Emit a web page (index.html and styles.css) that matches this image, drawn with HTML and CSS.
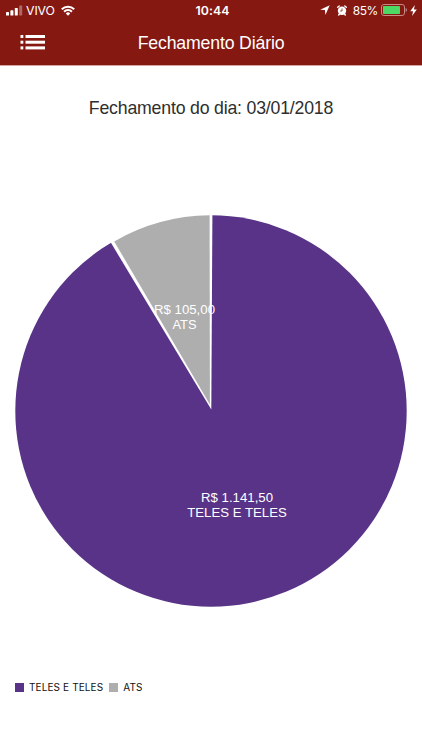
FILE: index.html
```html
<!DOCTYPE html>
<html lang="pt-BR">
<head>
    <meta charset="UTF-8">
    <meta name="viewport" content="width=device-width, initial-scale=1.0">
    <title>Fechamento Diário</title>
    <link rel="stylesheet" href="styles.css">
</head>
<body>

    <header class="header">
        <div class="status-bar">
            <div class="status-left">
                <svg class="signal" width="17" height="11" viewBox="0 0 17 11" fill="#fff">
                    <rect x="0" y="7" width="3" height="3.5" rx="0.6"/>
                    <rect x="4.4" y="5.3" width="3" height="5.2" rx="0.6"/>
                    <rect x="8.8" y="3" width="3" height="7.5" rx="0.6"/>
                    <rect x="13.2" y="0.5" width="3" height="10" rx="0.6" opacity="0.35"/>
                </svg>
                <span class="carrier">VIVO</span>
                <svg class="wifi" width="14" height="11" viewBox="0 0 14 11" fill="none" stroke="#fff" stroke-width="2">
                    <path d="M0.8 4.2a8.8 8.8 0 0 1 12.4 0"/>
                    <path d="M3.1 6.7a5.5 5.5 0 0 1 7.8 0"/>
                    <path d="M7 10.7L4.8 8.4a3.1 3.1 0 0 1 4.4 0z" fill="#fff" stroke="none"/>
                </svg>
            </div>
            <span class="time">10:44</span>
            <div class="status-right">
                <svg class="location" width="10" height="10" viewBox="0 0 10 10" fill="#fff">
                    <path d="M9.7 0.3L5.4 9.9L4.9 5.1L0.2 4.7z"/>
                </svg>
                <svg class="alarm" width="10" height="11" viewBox="0 0 10 11">
                    <path d="M0.7 2.3L2.2 1M9.3 2.3L7.8 1M2.4 9L1.7 10M7.6 9L8.3 10" stroke="#fff" stroke-width="1.4" stroke-linecap="round"/>
                    <circle cx="5" cy="5.8" r="4.2" fill="#fff"/>
                    <path d="M5 3.5V6H3.2" fill="none" stroke="#851912" stroke-width="0.8"/>
                </svg>
                <span class="percent">85%</span>
                <svg class="battery" width="26" height="12" viewBox="0 0 26 12">
                    <rect x="0.5" y="0.5" width="23" height="11" rx="2.4" fill="none" stroke="#c58c86"/>
                    <rect x="2" y="2" width="17" height="8" rx="0.8" fill="#4cd964"/>
                    <path d="M24.7 4a2.2 2.2 0 0 1 0 4z" fill="#c58c86"/>
                </svg>
                <svg class="bolt" width="7" height="11" viewBox="0 0 6 10" fill="#fff">
                    <path d="M4.2 0L0 5.6H2.6L1.7 10L6 4.2H3.4z"/>
                </svg>
            </div>
        </div>
        <div class="nav-bar">
            <svg class="menu" width="25" height="15" viewBox="0 0 25 15" fill="#fff">
                <rect x="0.5" y="0" width="2.8" height="3"/>
                <rect x="5.5" y="0" width="19.5" height="3"/>
                <rect x="0.5" y="5.7" width="2.8" height="3"/>
                <rect x="5.5" y="5.7" width="19.5" height="3"/>
                <rect x="0.5" y="11.4" width="2.8" height="3"/>
                <rect x="5.5" y="11.4" width="19.5" height="3"/>
            </svg>
            <h1 class="title">Fechamento Diário</h1>
        </div>
    </header>

    <main>
        <h2 class="subtitle">Fechamento do dia: 03/01/2018</h2>

        <svg class="chart" width="392" height="392" viewBox="0 0 392 392">
            <circle cx="196" cy="196" r="195.7" fill="#593387"/>
            <!-- gap between the slices -->
            <path d="M196.3 194.5L95.8 27.6L96.5 26.5A197 197 0 0 1 197.4 -1z" fill="#fff"/>
            <path d="M194.9 189.5L99.2 26.4A195.7 195.7 0 0 1 194.6 0.3z" fill="#aeaeae"/>
            <g class="slice-label">
                <text x="169.5" y="99" textLength="61" lengthAdjust="spacingAndGlyphs">R$ 105,00</text>
                <text x="169.5" y="114" textLength="24" lengthAdjust="spacingAndGlyphs">ATS</text>
                <text x="222" y="287" textLength="72" lengthAdjust="spacingAndGlyphs">R$ 1.141,50</text>
                <text x="222" y="302.4" textLength="99.5" lengthAdjust="spacingAndGlyphs">TELES E TELES</text>
            </g>
        </svg>

        <div class="legend">
            <span class="swatch purple"></span>
            <span class="legend-text">TELES E TELES</span>
            <span class="swatch gray"></span>
            <span class="legend-text">ATS</span>
        </div>
    </main>

</body>
</html>
```
FILE: styles.css
```css
body {
    margin: 0;
    background-color: #fff;
    font-family: "Liberation Sans", Arial, sans-serif;
    overflow: hidden;
}

.header {
    box-sizing: border-box;
    height: 66px;
    background-color: #851912;
    border-bottom: 1px solid #d3a5a2;
    color: #fff;
}

.status-bar {
    display: grid;
    grid-template-columns: 1fr auto 1fr;
    height: 21px;
    padding: 0 5px 0 6px;
    font-family: Inter, sans-serif;
    font-size: 12.3px;
    line-height: 21px;
}

.status-left, .status-right {
    display: flex;
    align-items: center;
    height: 20px;
}

.status-right {
    justify-content: flex-end;
}

.carrier {
    width: 28px;
    margin: 1px 7px 0 3px;
    letter-spacing: -0.1px;
}

.time {
    padding-left: 2px;
    font-weight: 600;
    letter-spacing: 0.1px;
}

.alarm {
    margin: 0 6px 0 7px;
}

.percent {
    margin-top: 1px;
    margin-right: 3px;
    font-size: 12px;
    letter-spacing: -0.4px;
}

.bolt {
    margin-left: 3px;
}

.nav-bar {
    display: grid;
    grid-template-columns: 1fr auto 1fr;
    align-items: center;
    height: 44px;
    padding-left: 20px;
    padding-right: 20px;
}

.menu {
    margin-bottom: 2px;
}

.title {
    margin: 0;
    font-size: 17.7px;
    font-weight: normal;
    letter-spacing: -0.16px;
    line-height: 44px;
}

.subtitle {
    margin: 31px 0 96px;
    font-size: 17.7px;
    font-weight: normal;
    letter-spacing: -0.19px;
    line-height: 22px;
    text-align: center;
    color: #2e2e2e;
}

.chart {
    display: block;
    margin-left: 15px;
}

.slice-label {
    font-size: 13.2px;
    fill: #fff;
    text-anchor: middle;
}

.legend {
    display: flex;
    align-items: center;
    height: 14px;
    margin-top: 73px;
    padding-left: 15px;
    font-family: Inter, sans-serif;
    font-size: 10px;
    letter-spacing: 0.12px;
    color: #111;
}

.swatch {
    width: 9px;
    height: 9px;
    margin-right: 5px;
}

.legend-text {
    margin-right: 6px;
}

.purple {
    background-color: #593387;
}

.gray {
    background-color: #aeaeae;
}
```
